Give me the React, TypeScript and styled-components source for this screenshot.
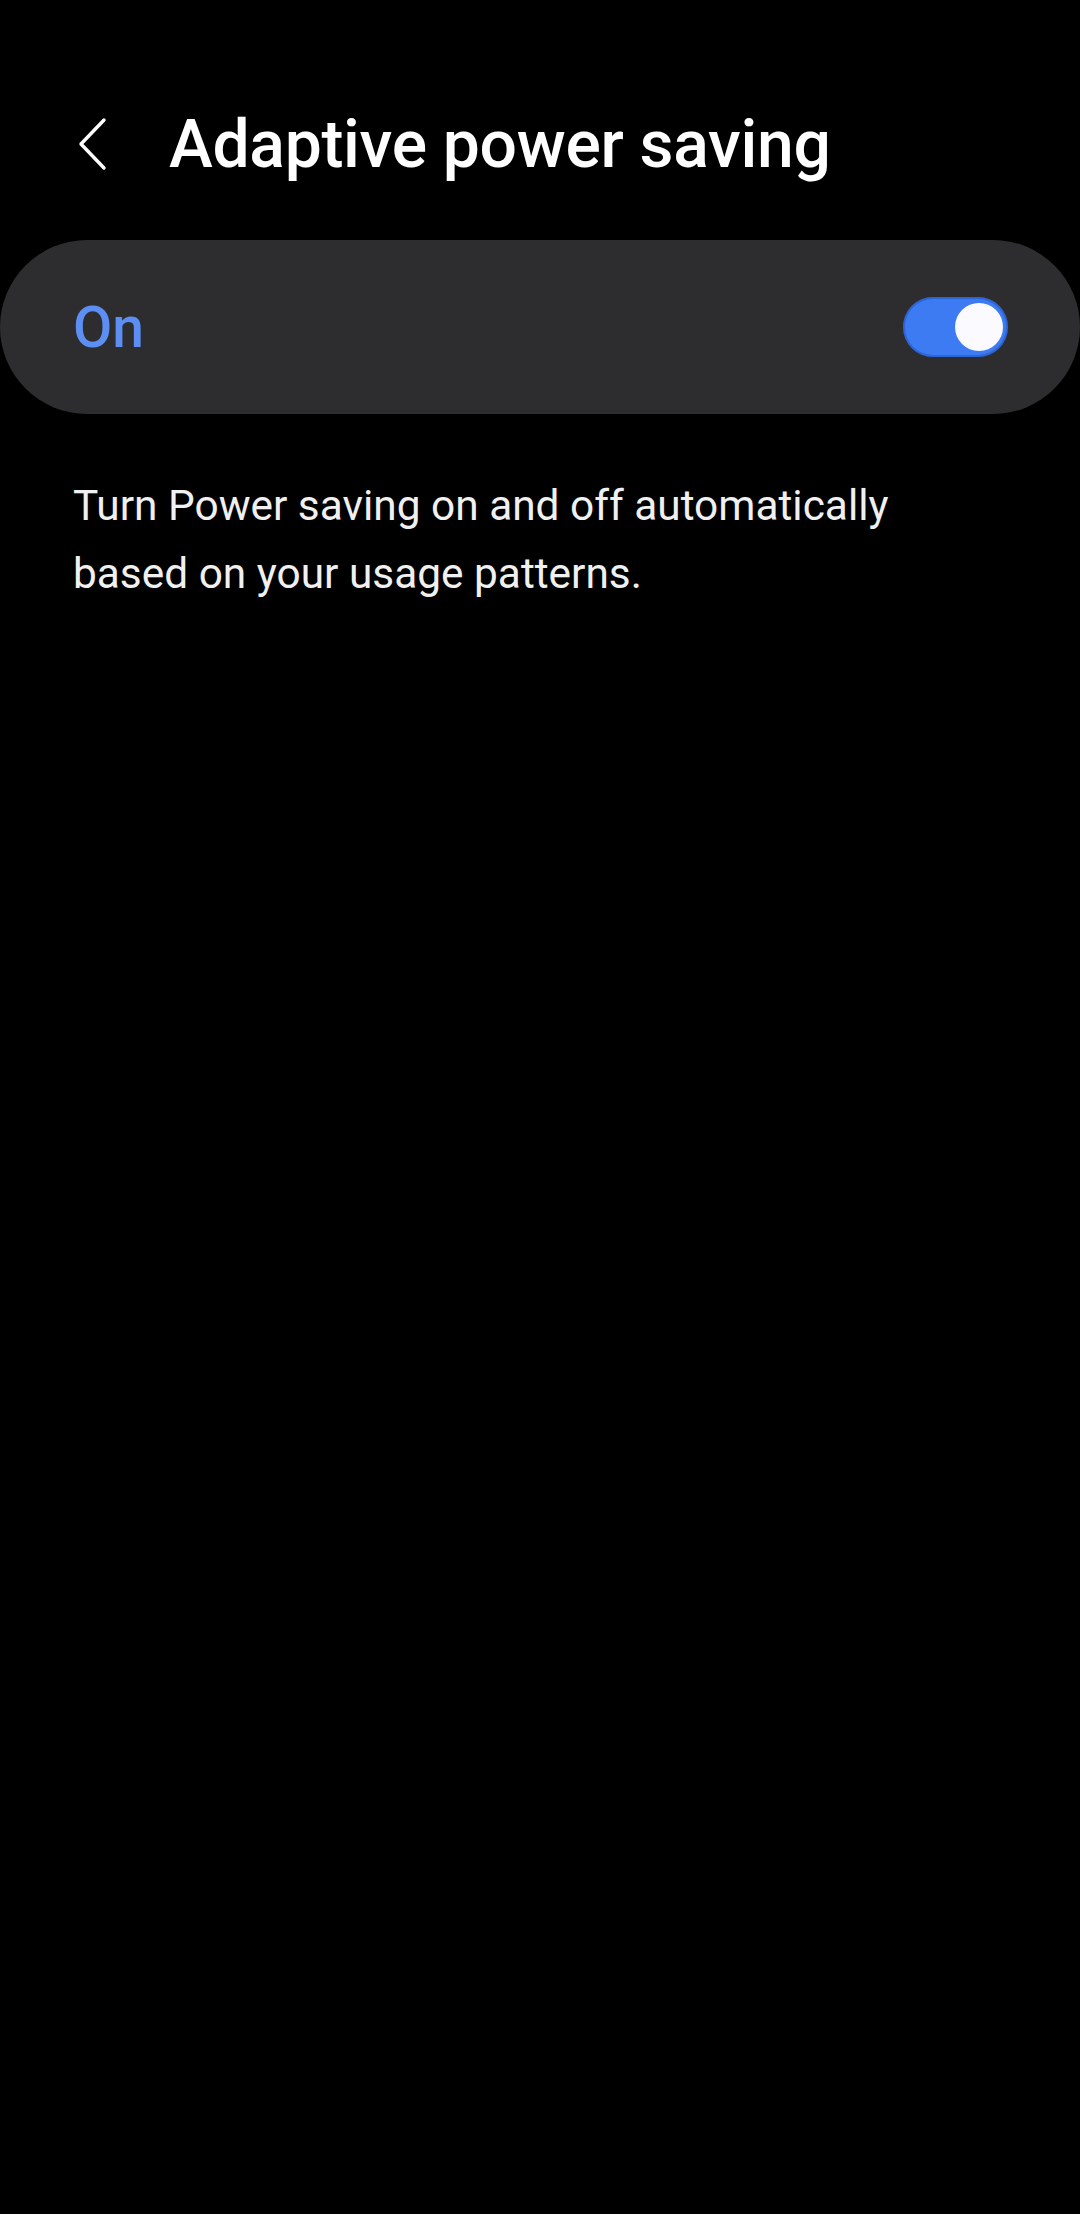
import styled, { createGlobalStyle } from 'styled-components';

const GlobalStyle = createGlobalStyle`
  html, body {
    margin: 0;
    padding: 0;
    background: #000;
  }
  body {
    font-family: Roboto, "Noto Sans", sans-serif;
    -webkit-font-smoothing: antialiased;
  }
`;

const App = () => {
  return (
    <>
      <GlobalStyle />
      <Screen>
        <Header>
          <BackButton aria-label="Back">
            <svg width="34" height="54" viewBox="0 0 34 54" fill="none">
              <path
                d="M28 3 L5 27 L28 51"
                stroke="#fff"
                strokeWidth="3.4"
                strokeLinecap="round"
                strokeLinejoin="round"
              />
            </svg>
          </BackButton>
          <Title>Adaptive power saving</Title>
        </Header>

        <SwitchCard>
          <SwitchLabel>On</SwitchLabel>
          <Toggle checked>
            <Thumb />
          </Toggle>
        </SwitchCard>

        <Description>
          Turn Power saving on and off automatically
          <br />
          based on your usage patterns.
        </Description>
      </Screen>
    </>
  );
};

export default App;

const Screen = styled.div`
  width: 1080px;
  min-height: 2214px;
  background: #000;
  color: #fff;
  display: flex;
  flex-direction: column;
`;

const Header = styled.header`
  display: flex;
  align-items: center;
  height: 240px;
  padding: 48px 0 0 76px;
  box-sizing: border-box;
`;

const BackButton = styled.button`
  display: flex;
  align-items: center;
  justify-content: center;
  width: 34px;
  height: 54px;
  padding: 0;
  margin-right: 59px;
  background: none;
  border: none;
`;

const Title = styled.h1`
  margin: 0;
  font-family: Roboto, sans-serif;
  font-weight: 500;
  font-size: 66px;
  letter-spacing: -0.3px;
  color: #fff;
`;

const SwitchCard = styled.div`
  display: flex;
  align-items: center;
  justify-content: space-between;
  height: 174px;
  padding: 0 72px 0 73px;
  background: #2d2d2f;
  border-radius: 87px;
`;

const SwitchLabel = styled.span`
  font-family: Roboto, sans-serif;
  font-weight: 500;
  font-size: 57px;
  color: #5d8ef3;
`;

const Toggle = styled.div<{ checked?: boolean }>`
  position: relative;
  width: 105px;
  height: 60px;
  border-radius: 30px;
  background: ${(props) => (props.checked ? '#3d7bf2' : '#5a5a5e')};
  box-shadow: inset 0 0 0 2px rgba(20, 60, 160, 0.35);
`;

const Thumb = styled.span`
  position: absolute;
  top: 6px;
  right: 5px;
  width: 48px;
  height: 48px;
  border-radius: 50%;
  background: #fbfbff;
`;

const Description = styled.p`
  margin: 58px 0 0;
  padding: 0 73px;
  font-family: Roboto, sans-serif;
  font-weight: 400;
  font-size: 42.4px;
  line-height: 68px;
  color: #f0f0f0;
`;
